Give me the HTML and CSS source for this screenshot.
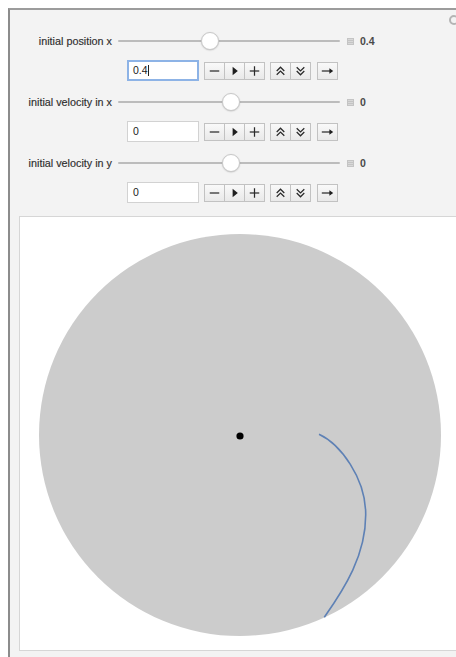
FILE: index.html
```html
<!DOCTYPE html>
<html>
<head>
<meta charset="utf-8">
<link rel="stylesheet" href="styles.css">
</head>
<body>
<div class="frame">
  <span class="gear"></span>
  <div class="controls">
    <div class="control">
      <div class="slider-row">
        <span class="label">initial position x</span>
        <div class="slider"><div class="track"></div><div class="thumb" style="left: 83px"></div></div>
        <span class="expand"></span>
        <span class="value">0.4</span>
      </div>
      <div class="input-row">
        <div class="field focused">0.4<span class="caret"></span></div>
        <div class="btn-group">
          <span class="btn"><svg viewBox="0 0 20 16"><line x1="5" y1="8" x2="15" y2="8"/></svg></span>
          <span class="btn"><svg viewBox="0 0 20 16"><polygon class="fill" points="8,3.5 13.5,8 8,12.5"/></svg></span>
          <span class="btn"><svg viewBox="0 0 20 16"><line x1="5" y1="8" x2="15" y2="8"/><line x1="10" y1="3" x2="10" y2="13"/></svg></span>
        </div>
        <div class="btn-group">
          <span class="btn"><svg viewBox="0 0 20 16"><polyline points="6,8 10,4 14,8"/><polyline points="6,12 10,8 14,12"/></svg></span>
          <span class="btn"><svg viewBox="0 0 20 16"><polyline points="6,4 10,8 14,4"/><polyline points="6,8 10,12 14,8"/></svg></span>
        </div>
        <div class="btn-group">
          <span class="btn"><svg viewBox="0 0 20 16"><line x1="4" y1="8" x2="13" y2="8"/><polygon class="fill" points="12,5 16,8 12,11"/></svg></span>
        </div>
      </div>
    </div>

    <div class="control">
      <div class="slider-row">
        <span class="label">initial velocity in x</span>
        <div class="slider"><div class="track"></div><div class="thumb" style="left: 104px"></div></div>
        <span class="expand"></span>
        <span class="value">0</span>
      </div>
      <div class="input-row">
        <div class="field">0</div>
        <div class="btn-group">
          <span class="btn"><svg viewBox="0 0 20 16"><line x1="5" y1="8" x2="15" y2="8"/></svg></span>
          <span class="btn"><svg viewBox="0 0 20 16"><polygon class="fill" points="8,3.5 13.5,8 8,12.5"/></svg></span>
          <span class="btn"><svg viewBox="0 0 20 16"><line x1="5" y1="8" x2="15" y2="8"/><line x1="10" y1="3" x2="10" y2="13"/></svg></span>
        </div>
        <div class="btn-group">
          <span class="btn"><svg viewBox="0 0 20 16"><polyline points="6,8 10,4 14,8"/><polyline points="6,12 10,8 14,12"/></svg></span>
          <span class="btn"><svg viewBox="0 0 20 16"><polyline points="6,4 10,8 14,4"/><polyline points="6,8 10,12 14,8"/></svg></span>
        </div>
        <div class="btn-group">
          <span class="btn"><svg viewBox="0 0 20 16"><line x1="4" y1="8" x2="13" y2="8"/><polygon class="fill" points="12,5 16,8 12,11"/></svg></span>
        </div>
      </div>
    </div>

    <div class="control">
      <div class="slider-row">
        <span class="label">initial velocity in y</span>
        <div class="slider"><div class="track"></div><div class="thumb" style="left: 104px"></div></div>
        <span class="expand"></span>
        <span class="value">0</span>
      </div>
      <div class="input-row">
        <div class="field">0</div>
        <div class="btn-group">
          <span class="btn"><svg viewBox="0 0 20 16"><line x1="5" y1="8" x2="15" y2="8"/></svg></span>
          <span class="btn"><svg viewBox="0 0 20 16"><polygon class="fill" points="8,3.5 13.5,8 8,12.5"/></svg></span>
          <span class="btn"><svg viewBox="0 0 20 16"><line x1="5" y1="8" x2="15" y2="8"/><line x1="10" y1="3" x2="10" y2="13"/></svg></span>
        </div>
        <div class="btn-group">
          <span class="btn"><svg viewBox="0 0 20 16"><polyline points="6,8 10,4 14,8"/><polyline points="6,12 10,8 14,12"/></svg></span>
          <span class="btn"><svg viewBox="0 0 20 16"><polyline points="6,4 10,8 14,4"/><polyline points="6,8 10,12 14,8"/></svg></span>
        </div>
        <div class="btn-group">
          <span class="btn"><svg viewBox="0 0 20 16"><line x1="4" y1="8" x2="13" y2="8"/><polygon class="fill" points="12,5 16,8 12,11"/></svg></span>
        </div>
      </div>
    </div>
  </div>

  <div class="plot">
    <svg width="436" height="433" viewBox="20 217 436 433">
      <circle cx="240" cy="435" r="201" fill="#cccccc"/>
      <circle cx="240" cy="436" r="3.6" fill="#000"/>
      <path d="M319 434.3 C340 444 366 478 365.7 515 C365.7 555 345 588 324.3 617.3" fill="none" stroke="#5e81b5" stroke-width="1.6"/>
    </svg>
  </div>
</div>
</body>
</html>
```

FILE: styles.css
```css
html, body {
  margin: 0;
  padding: 0;
  background: #ffffff;
  overflow: hidden;
  width: 456px;
  height: 657px;
}

.frame {
  position: relative;
  margin: 8px 0 0 8px;
  width: 448px;
  height: 649px;
  box-sizing: border-box;
  overflow: hidden;
  border-left: 2px solid #8c8c8c;
  border-top: 2px solid #9c9c9c;
  background: #f3f3f3;
  font-family: "Liberation Sans", Arial, sans-serif;
  color: #333;
}

.gear {
  position: absolute;
  left: 439px;
  top: 5px;
  width: 6px;
  height: 6px;
  border: 2px solid #b4b4b4;
  border-radius: 50%;
}

.controls {
  padding-top: 21px;
  display: flex;
  flex-direction: column;
  gap: 11px;
}

.control {
  display: flex;
  flex-direction: column;
  gap: 9px;
}

.slider-row {
  display: flex;
  align-items: center;
  height: 20px;
}

.label {
  width: 102px;
  text-align: right;
  font-size: 10.8px;
  color: #2e2e2e;
  -webkit-text-stroke: 0.15px #2e2e2e;
  white-space: nowrap;
}

.slider {
  position: relative;
  margin-left: 6px;
  width: 222px;
  height: 20px;
  display: flex;
  align-items: center;
}

.track {
  width: 100%;
  height: 2px;
  background: #bcbcbc;
  border-radius: 1px;
}

.thumb {
  position: absolute;
  top: 1px;
  width: 16px;
  height: 16px;
  border-radius: 50%;
  background: #ffffff;
  border: 1px solid #c8c8c8;
  box-shadow: 0 0.5px 1.5px rgba(0, 0, 0, 0.18);
}

.expand {
  margin-left: 7px;
  width: 7px;
  height: 7px;
  box-sizing: border-box;
  border: 1px solid #c4c4c4;
  background: repeating-linear-gradient(#d8d8d8 0 1px, #c4c4c4 1px 2px);
}

.value {
  margin-left: 6px;
  font-size: 10.5px;
  font-weight: bold;
  color: #4a4a4a;
}

.input-row {
  display: flex;
  align-items: center;
  height: 21px;
  padding-left: 117px;
}

.field {
  position: relative;
  width: 72px;
  height: 21px;
  box-sizing: border-box;
  border: 1px solid #d2d2d2;
  background: #ffffff;
  font-size: 10.5px;
  color: #222;
  line-height: 19px;
  padding-left: 5px;
  display: flex;
  align-items: center;
}

.field.focused {
  border: 2px solid #8db3e6;
  padding-left: 4px;
  line-height: 17px;
}

.caret {
  width: 1px;
  height: 11px;
  background: #222;
  margin-left: 0.5px;
}

.btn-group {
  display: flex;
  margin-left: 5px;
}

.btn-group:first-of-type {
  margin-left: 4px;
}

.btn-group:last-child {
  margin-left: 6px;
}

.btn {
  width: 21px;
  height: 18px;
  box-sizing: border-box;
  border: 1px solid #c2c2c2;
  background: linear-gradient(#f9f9f9, #e9e9e9);
  display: flex;
  align-items: center;
  justify-content: center;
}

.btn + .btn {
  margin-left: -1px;
}

.btn svg {
  width: 20px;
  height: 16px;
  fill: none;
  stroke: #2a2a2a;
  stroke-width: 1.3;
}

.btn svg .fill {
  fill: #1e1e1e;
  stroke: none;
}

.plot {
  margin: 13px 0 0 9px;
  width: 438px;
  height: 435px;
  box-sizing: border-box;
  border: 1px solid #d6d6d6;
  border-right: none;
  background: #ffffff;
}

.plot svg {
  display: block;
}
```
